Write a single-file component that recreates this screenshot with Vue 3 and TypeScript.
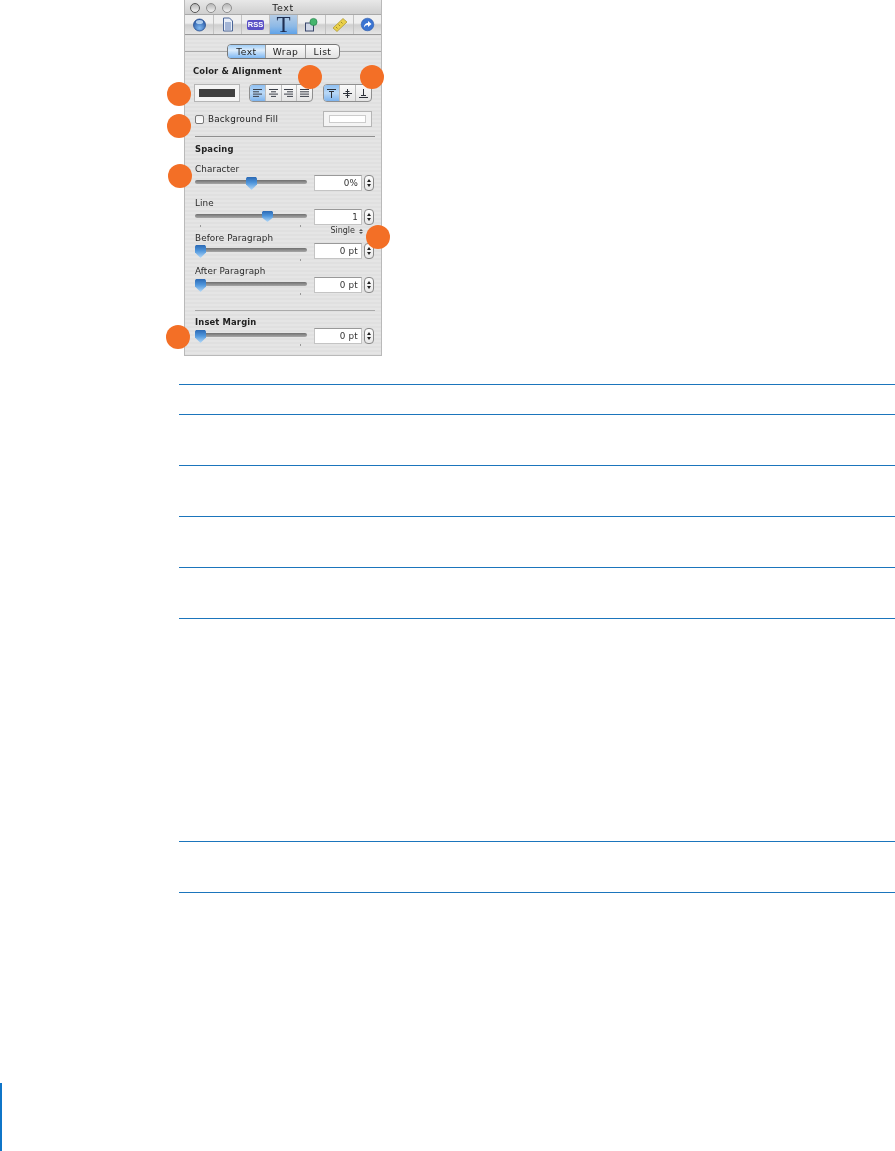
<script setup lang="ts">
const tools = ['globe', 'doc', 'rss', 'text', 'shapes', 'ruler', 'arrow']
const lines = [30, 51, 51, 51, 51, 223, 51]
const aligns = [
  [[2, 11], [2, 8], [2, 11], [2, 8]],
  [[2, 11], [4, 9], [2, 11], [4, 9]],
  [[2, 11], [5, 11], [2, 11], [5, 11]],
  [[2, 11], [2, 11], [2, 11], [2, 11]]
]
const dots = ['c1', 'c2', 'c3', 'c4', 'c5', 'c6', 'c7']
</script>

<template>
  <main class="page">
    <section class="figure">
      <div class="panel">
        <header class="title">
          <div class="lights"><i></i><i></i><i></i></div>
          <span>Text</span>
        </header>
        <nav class="toolbar">
          <div v-for="t in tools" :key="t" class="tool" :class="{ active: t === 'text' }">
            <svg v-if="t === 'globe'" width="15" height="16" viewBox="0 0 15 16">
              <defs>
                <radialGradient id="gl" cx=".5" cy=".75" r=".75">
                  <stop offset="0" stop-color="#7fb8f0" /><stop offset="1" stop-color="#1f4f9e" />
                </radialGradient>
              </defs>
              <circle cx="7.5" cy="8" r="6" fill="url(#gl)" stroke="#274f90" stroke-width=".8" />
              <ellipse cx="7.5" cy="5" rx="3.6" ry="2" fill="#c4def7" opacity=".85" />
            </svg>
            <svg v-else-if="t === 'doc'" width="12" height="15" viewBox="0 0 12 15">
              <path d="M1.5 1h6l3 3v10h-9z" fill="#e8eef8" stroke="#4a6496" />
              <path d="M3 6h6M3 8h6M3 10h6M3 12h6" stroke="#5f7db5" />
            </svg>
            <span v-else-if="t === 'rss'" class="rss">RSS</span>
            <span v-else-if="t === 'text'" class="big-t">T</span>
            <svg v-else-if="t === 'shapes'" width="15" height="15" viewBox="0 0 15 15">
              <rect x="1.5" y="6" width="8" height="8" fill="#cfd6e6" stroke="#39466a" />
              <circle cx="9.500" cy="5" r="3.600" fill="#45b56d" stroke="#1f7a45" stroke-width=".6" />
            </svg>
            <svg v-else-if="t === 'ruler'" width="16" height="16" viewBox="0 0 16 16">
              <path d="M1 11 11 1.500l4 3.500L5 14.500z" fill="#ead04a" stroke="#a8922a" stroke-width=".7" />
              <path d="M4 10l1.500 1.500M6.500 7.500 8 9M9 5l1.500 1.500" stroke="#8d7a1e" stroke-width=".8" />
            </svg>
            <svg v-else width="15" height="15" viewBox="0 0 15 15">
              <circle cx="7.500" cy="7.500" r="6.300" fill="#3a74d2" stroke="#2a58a8" stroke-width=".6" />
              <path d="M4 10.500c0-3 1.500-4.500 4-4.500V4l3.500 3L8 10V8c-2 0-3 .8-4 2.500z" fill="#fff" />
            </svg>
          </div>
        </nav>

        <div class="tabs-row">
          <div class="tabs">
            <span class="tab on">Text</span>
            <span class="tab">Wrap</span>
            <span class="tab">List</span>
          </div>
        </div>

        <div class="body">
          <h4 class="head first">Color &amp; Alignment</h4>
          <div class="align-row">
            <div class="well dark"><b></b></div>
            <div class="seg seg-h">
              <span v-for="(a, i) in aligns" :key="i" class="cell" :class="{ on: i === 0 }">
                <svg width="13" height="10" viewBox="0 0 13 10">
                  <path
                    v-for="(l, j) in a"
                    :key="j"
                    :d="`M${l[0]} ${1.5 + j * 2.3}H${l[1]}`"
                    stroke="#3b3f48"
                  />
                </svg>
              </span>
            </div>
            <div class="seg seg-v">
              <span class="cell on">
                <svg width="11" height="11" viewBox="0 0 11 11"><path d="M1 1.500h9M5.500 3v7M3 3.500h5" stroke="#2c3038" /></svg>
              </span>
              <span class="cell">
                <svg width="11" height="11" viewBox="0 0 11 11"><path d="M1 5.500h9M5.500 1v9M3.500 3.500h4M3.500 7.500h4" stroke="#2c3038" /></svg>
              </span>
              <span class="cell">
                <svg width="11" height="11" viewBox="0 0 11 11"><path d="M1 9.500h9M5.500 1v7M3 7.500h5" stroke="#2c3038" /></svg>
              </span>
            </div>
          </div>
          <div class="fill-row">
            <label class="check"><i></i><span>Background Fill</span></label>
            <div class="well light"><b></b></div>
          </div>
          <hr class="rule one" />
          <h4 class="head spacing">Spacing</h4>

          <div class="label lbl-char">Character</div>
          <div class="ctl">
            <div class="slider"><em class="thumb t1"></em></div>
            <div class="field">0%</div>
            <div class="stepper"><i></i><i></i></div>
          </div>

          <div class="label lbl-line">Line</div>
          <div class="ctl">
            <div class="slider"><em class="thumb t2 short"></em><u class="tick a"></u><u class="tick b"></u></div>
            <div class="field">1</div>
            <div class="stepper"><i></i><i></i></div>
          </div>
          <div class="between">
            <div class="label before">Before Paragraph</div>
            <div class="single">Single<span class="updown"><i></i><i></i></span></div>
          </div>
          <div class="ctl">
            <div class="slider"><em class="thumb"></em><u class="tick b"></u></div>
            <div class="field">0 pt</div>
            <div class="stepper"><i></i><i></i></div>
          </div>

          <div class="label lbl-line">After Paragraph</div>
          <div class="ctl">
            <div class="slider"><em class="thumb"></em><u class="tick b"></u></div>
            <div class="field">0 pt</div>
            <div class="stepper"><i></i><i></i></div>
          </div>

          <hr class="rule two" />
          <h4 class="head inset">Inset Margin</h4>
          <div class="ctl">
            <div class="slider"><em class="thumb"></em><u class="tick b"></u></div>
            <div class="field">0 pt</div>
            <div class="stepper"><i></i><i></i></div>
          </div>
        </div>
      </div>
      <span v-for="d in dots" :key="d" class="dot" :class="d"></span>
    </section>

    <div class="rows">
      <div v-for="(h, i) in lines" :key="i" class="row" :style="{ height: h + 'px' }"></div>
      <div class="row end"></div>
    </div>
    <div class="change-bar"></div>
  </main>
</template>

<style scoped>
.page {
  width: 895px;
  height: 1151px;
  background: #fff;
  overflow: hidden;
  font-family: "DejaVu Sans", sans-serif;
  color: #222;
}
.figure {
  position: relative;
  height: 384px;
  padding-left: 184px;
  box-sizing: border-box;
}
.panel {
  width: 198px;
  height: 356px;
  box-sizing: border-box;
  border: 1px solid #b9b9b9;
  border-top: 0;
  background: repeating-linear-gradient(#e5e5e5 0 2px, #e0e0e0 2px 4px);
  filter: blur(.4px);
}
.title {
  height: 14px;
  display: flex;
  align-items: center;
  justify-content: center;
  position: relative;
  background: linear-gradient(#e8e8e8, #cfcfcf);
  font-size: 9.5px;
  letter-spacing: .6px;
}
.lights {
  position: absolute;
  left: 5px;
  top: 3px;
  display: flex;
  gap: 6px;
}
.lights i {
  width: 10px;
  height: 10px;
  border-radius: 50%;
  box-sizing: border-box;
  border: 1px solid #8f8f8f;
  background: linear-gradient(#b5b5b5, #f2f2f2);
}
.lights i:first-child { border-color: #555; }
.toolbar {
  height: 21px;
  box-sizing: border-box;
  display: flex;
  border-top: 1px solid #a9a9a9;
  border-bottom: 1px solid #9a9a9a;
  background: linear-gradient(#efefef 0 42%, #cfcfcf 52%, #e6e6e6 100%);
}
.tool {
  width: 28px;
  display: flex;
  align-items: center;
  justify-content: center;
  border-right: 1px solid #c2c2c2;
  box-sizing: border-box;
}
.tool:first-child { width: 29px; }
.tool:last-child { border-right: 0; flex: 1; }
.tool.active { background: linear-gradient(#b6cde6, #8db9e6 60%, #5fa3ea); }
.rss {
  width: 17px;
  height: 10px;
  border-radius: 2px;
  background: #5a50c6;
  color: #fff;
  font: bold 7.5px/10px "Liberation Sans", sans-serif;
  text-align: center;
}
.big-t {
  font: 23px/19px "Liberation Serif", serif;
  color: #1f2f52;
}
.tabs-row {
  height: 21px;
  margin-top: 9px;
  display: flex;
  justify-content: flex-start;
  padding-left: 42px;
  background: linear-gradient(#a8a8a8, #a8a8a8) 0 7px / 100% 1px no-repeat;
}
.tabs {
  height: 15px;
  display: flex;
  box-sizing: border-box;
  border: 1px solid #777;
  border-radius: 4px;
  background: linear-gradient(#fbfbfb, #e2e2e2);
  overflow: hidden;
  font-size: 9.2px;
  line-height: 13px;
  letter-spacing: .45px;
}
.tab {
  width: 38px;
  box-sizing: border-box;
  text-align: center;
  border-right: 1px solid #999;
}
.tab:nth-child(2) { width: 40px; }
.tab:last-child { border-right: 0; width: 33px; }
.tab.on { background: linear-gradient(#9fcdf6, #dcecfb 40%, #7fb8f2); }
.body { padding: 0 7px 0 9px; }
.head {
  margin: 0;
  font-size: 8.4px;
  line-height: 12px;
  font-weight: bold;
  letter-spacing: .15px;
  color: #222;
}
.head.first { margin-left: -1px; margin-top: 0; }
.align-row {
  display: flex;
  margin-top: 7px;
  height: 18px;
}
.well {
  box-sizing: border-box;
  border: 1px solid #b5b5b5;
  background: #f4f4f4;
  display: flex;
}
.well b { flex: 1; }
.well.dark { width: 46px; padding: 4px; }
.well.dark b { background: #404040; }
.well.light { width: 49px; height: 16px; padding: 3px 5px; }
.well.light b { background: #fff; border: 1px solid #ccc; }
.seg {
  height: 18px;
  display: flex;
  box-sizing: border-box;
  border: 1px solid #8f8f8f;
  border-radius: 4px;
  background: linear-gradient(#fafafa, #e4e4e4);
  overflow: hidden;
}
.seg-h { margin-left: 9px; width: 64px; }
.seg-v { margin-left: 10px; width: 49px; }
.cell {
  flex: 1;
  display: flex;
  align-items: center;
  justify-content: center;
  border-right: 1px solid #bdbdbd;
}
.cell:last-child { border-right: 0; }
.cell.on { background: linear-gradient(#8fc0f2, #b9d8f6 50%, #7db4ee); }
.fill-row {
  margin-top: 9px;
  height: 16px;
  display: flex;
  align-items: center;
  justify-content: space-between;
  padding-right: 2px;
}
.check {
  display: flex;
  align-items: center;
  gap: 4px;
  font-size: 8.8px;
  letter-spacing: .2px;
}
.check i {
  width: 9px;
  height: 9px;
  margin-left: 1px;
  box-sizing: border-box;
  border: 1px solid #777;
  border-radius: 2px;
  background: linear-gradient(#eee, #fff);
}
.rule {
  margin: 0;
  height: 1px;
  border: 0;
  width: 180px;
  margin-left: 1px;
}
.rule.one { margin-top: 9px; background: #8e8e8e; }
.rule.two { margin-top: 17px; background: #aaa; }
.head.spacing { margin: 6px 0 0 1px; }
.head.inset { margin: 5px 0 0 1px; }
.label {
  font-size: 8.8px;
  line-height: 12px;
  margin-left: 1px;
  letter-spacing: .1px;
  color: #2a2a2a;
}
.lbl-char { margin-top: 8px; }
.lbl-line { margin-top: 6px; }
.before { margin-bottom: -1px; }
.between {
  height: 18px;
  display: flex;
  justify-content: space-between;
  align-items: flex-end;
  padding-right: 11px;
}
.single {
  align-self: flex-start;
  display: flex;
  align-items: center;
  gap: 4px;
  font-size: 8px;
  line-height: 12px;
  color: #333;
}
.updown {
  display: flex;
  flex-direction: column;
  gap: 1px;
}
.updown i { width: 0; height: 0; border: 2px solid transparent; }
.updown i:first-child { border-top: 0; border-bottom: 2.500px solid #555; }
.updown i:last-child { border-bottom: 0; border-top: 2.500px solid #555; }
.ctl {
  height: 16px;
  display: flex;
  align-items: flex-start;
  margin-left: 1px;
}
.slider {
  width: 112px;
  height: 4px;
  margin-top: 5px;
  position: relative;
  border-radius: 2px;
  background: linear-gradient(#6f6f6f, #a8a8a8);
}
.thumb {
  position: absolute;
  left: 0;
  top: -3px;
  width: 11px;
  height: 13px;
  background: linear-gradient(#2b69b4, #4f96dc 45%, #b4d9f8);
  clip-path: polygon(10% 0, 90% 0, 100% 10%, 100% 58%, 50% 100%, 0 58%, 0 10%);
}
.thumb.short { height: 11px; }
.t1 { left: 51px; }
.t2 { left: 67px; }
.tick {
  position: absolute;
  top: 11px;
  width: 1px;
  height: 2px;
  background: #999;
}
.tick.a { left: 5px; }
.tick.b { left: 105px; }
.field {
  width: 48px;
  height: 16px;
  margin-left: 7px;
  box-sizing: border-box;
  border: 1px solid #c4c4c4;
  border-top-color: #999;
  background: #fff;
  font-size: 8.8px;
  line-height: 14px;
  text-align: right;
  padding-right: 3px;
  letter-spacing: .2px;
  color: #333;
}
.stepper {
  width: 10px;
  height: 16px;
  margin-left: 2px;
  box-sizing: border-box;
  border: 1px solid #888;
  border-radius: 4px;
  background: linear-gradient(#fdfdfd, #e8e8e8);
  display: flex;
  flex-direction: column;
  align-items: center;
  justify-content: space-evenly;
}
.stepper i { width: 0; height: 0; border: 2px solid transparent; }
.stepper i:first-child { border-top: 0; border-bottom: 3px solid #222; }
.stepper i:last-child { border-bottom: 0; border-top: 3px solid #222; }
.dot {
  position: absolute;
  width: 24px;
  height: 24px;
  border-radius: 50%;
  background: #f36f26;
}
.c1 { left: 167px; top: 82px; }
.c2 { left: 298px; top: 65px; }
.c3 { left: 360px; top: 65px; }
.c4 { left: 167px; top: 114px; }
.c5 { left: 168px; top: 164px; }
.c6 { left: 366px; top: 225px; }
.c7 { left: 166px; top: 325px; }
.rows { padding-left: 179px; }
.row { border-top: 1px solid #1b75bc; box-sizing: border-box; }
.row.end { height: 1px; }
.change-bar {
  width: 2px;
  height: 68px;
  margin-top: 190px;
  background: #0f75c8;
}
</style>
